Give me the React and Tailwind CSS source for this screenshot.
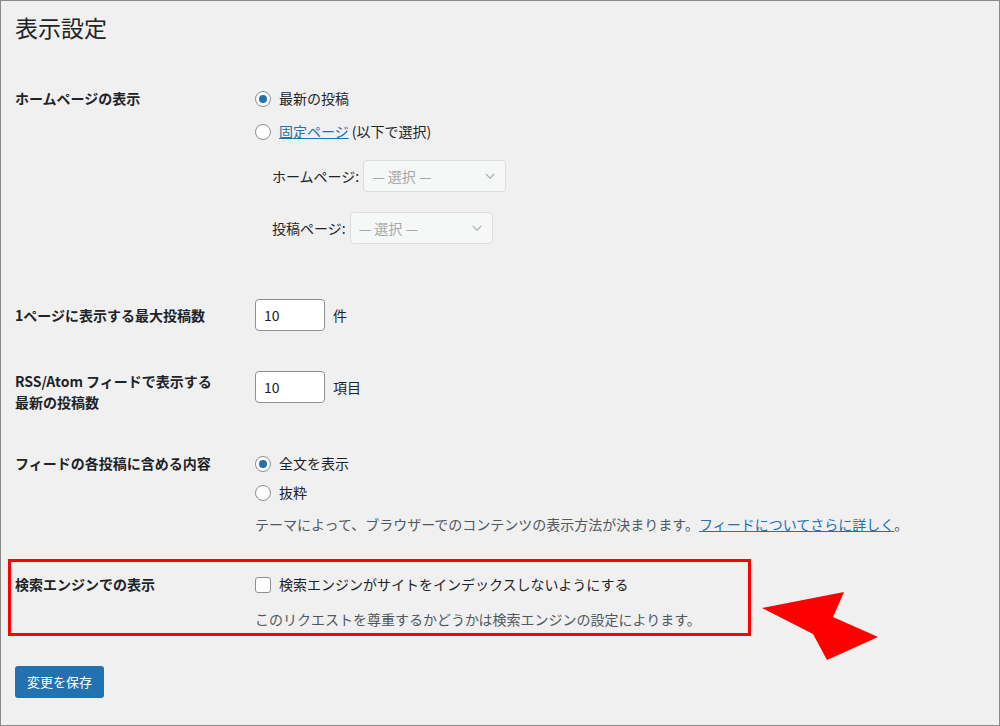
import React from 'react';

const font = { fontFamily: '"Noto Sans CJK JP", "Liberation Sans", sans-serif' };

function Radio({ checked }) {
  return (
    <span className="w-4 h-4 rounded-full border border-[#8c8f94] bg-white flex items-center justify-center shrink-0">
      {checked && <span className="w-2 h-2 rounded-full bg-[#2271b1]" />}
    </span>
  );
}

function Select({ width }) {
  return (
    <div className={`${width} h-8 border border-[#dcdcde] rounded bg-[#f6f7f7] flex items-center justify-between px-2 text-[#a7aaad]`}>
      <span>— 選択 —</span>
      <svg width="14" height="14" viewBox="0 0 20 20" fill="none" stroke="#a7aaad" strokeWidth="1.6"><path d="M4 7l6 6 6-6" /></svg>
    </div>
  );
}

function Row({ label, children, className = '' }) {
  return (
    <div className={`flex ${className}`}>
      <div className="w-[240px] font-bold text-[#1d2327] leading-[21px]">{label}</div>
      <div className="flex-1">{children}</div>
    </div>
  );
}

export default function App() {
  return (
    <div style={font} className="relative w-[1000px] h-[726px] bg-[#f0f0f1] border border-[#8a8a8a] text-[14px] text-[#1d2327] px-[14px] pt-[10px] overflow-hidden">
      <h1 className="text-[23px] leading-[32px] font-normal">表示設定</h1>

      <Row label="ホームページの表示" className="mt-[45px]">
        <div className="flex items-center gap-2 h-[21px]"><Radio checked /><span>最新の投稿</span></div>
        <div className="flex items-center gap-2 h-[21px] mt-[12px]"><Radio /><span><span className="text-[#2271b1] underline">固定ページ</span> (以下で選択)</span></div>
        <div className="flex items-center gap-1 ml-[17px] mt-[18px]"><span>ホームページ:</span><Select width="w-[143px]" /></div>
        <div className="flex items-center gap-1 ml-[17px] mt-[20px]"><span>投稿ページ:</span><Select width="w-[143px]" /></div>
      </Row>

      <Row label="1ページに表示する最大投稿数" className="mt-[55px] items-center">
        <div className="flex items-center gap-2"><div className="w-[70px] h-8 bg-white border border-[#8c8f94] rounded px-2 flex items-center">10</div><span>件</span></div>
      </Row>

      <Row label={<>RSS/Atom フィードで表示する<br />最新の投稿数</>} className="mt-[40px]">
        <div className="flex items-center gap-2"><div className="w-[70px] h-8 bg-white border border-[#8c8f94] rounded px-2 flex items-center">10</div><span>項目</span></div>
      </Row>

      <Row label="フィードの各投稿に含める内容" className="mt-[40px]">
        <div className="flex items-center gap-2 h-[21px]"><Radio checked /><span>全文を表示</span></div>
        <div className="flex items-center gap-2 h-[21px] mt-[8px]"><Radio /><span>抜粋</span></div>
        <p className="mt-[11px] text-[#50575e] leading-[21px]">テーマによって、ブラウザーでのコンテンツの表示方法が決まります。<span className="text-[#2271b1] underline">フィードについてさらに詳しく</span>。</p>
      </Row>

      <div className="w-[743px] h-[77px] border-[3px] border-[#ff0000] -ml-[7px] mt-[24px] pl-[4px] pt-[12px]">
        <Row label="検索エンジンでの表示">
          <div className="flex items-center gap-2 h-[21px]"><span className="w-4 h-4 rounded-[3px] border border-[#8c8f94] bg-white" /><span>検索エンジンがサイトをインデックスしないようにする</span></div>
          <p className="mt-[14px] text-[#50575e] leading-[21px]">このリクエストを尊重するかどうかは検索エンジンの設定によります。</p>
        </Row>
      </div>

      <button className="mt-[30px] h-[32px] px-3 bg-[#2271b1] text-white rounded-[3px] text-[13px]">変更を保存</button>

      <svg className="absolute left-0 top-0 pointer-events-none" width="1000" height="726">
        <polygon points="761,607 843,591 832,616 877,636 826,659 812,633" fill="#ff0000" />
      </svg>
    </div>
  );
}
